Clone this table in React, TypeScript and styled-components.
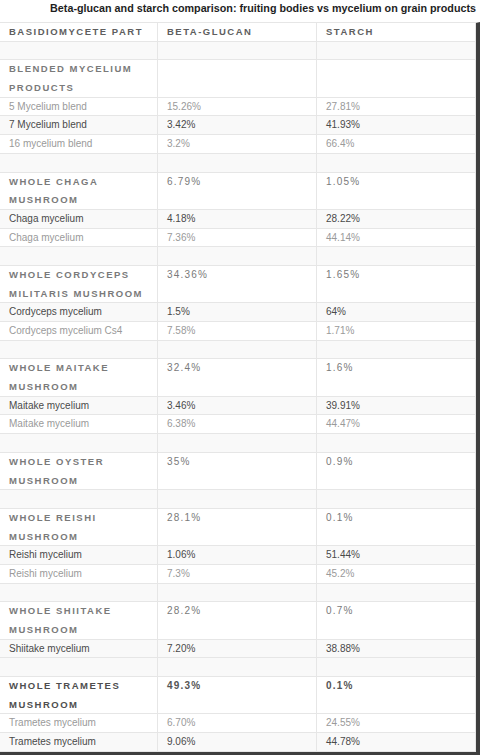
import React from "react";
import styled, { createGlobalStyle } from "styled-components";

type Row =
  | { kind: "empty" }
  | { kind: "group"; label: string; beta?: string; starch?: string; strong?: boolean }
  | { kind: "item"; label: string; beta: string; starch: string; dark: boolean };

const UNIT = 18.69;

const rows: Row[] = [
  { kind: "empty" },
  { kind: "group", label: "Blended mycelium products" },
  { kind: "item", label: "5 Mycelium blend", beta: "15.26%", starch: "27.81%", dark: false },
  { kind: "item", label: "7 Mycelium blend", beta: "3.42%", starch: "41.93%", dark: true },
  { kind: "item", label: "16 mycelium blend", beta: "3.2%", starch: "66.4%", dark: false },
  { kind: "empty" },
  { kind: "group", label: "Whole chaga mushroom", beta: "6.79%", starch: "1.05%" },
  { kind: "item", label: "Chaga mycelium", beta: "4.18%", starch: "28.22%", dark: true },
  { kind: "item", label: "Chaga mycelium", beta: "7.36%", starch: "44.14%", dark: false },
  { kind: "empty" },
  { kind: "group", label: "Whole cordyceps militaris mushroom", beta: "34.36%", starch: "1.65%" },
  { kind: "item", label: "Cordyceps mycelium", beta: "1.5%", starch: "64%", dark: true },
  { kind: "item", label: "Cordyceps mycelium Cs4", beta: "7.58%", starch: "1.71%", dark: false },
  { kind: "empty" },
  { kind: "group", label: "Whole maitake mushroom", beta: "32.4%", starch: "1.6%" },
  { kind: "item", label: "Maitake mycelium", beta: "3.46%", starch: "39.91%", dark: true },
  { kind: "item", label: "Maitake mycelium", beta: "6.38%", starch: "44.47%", dark: false },
  { kind: "empty" },
  { kind: "group", label: "Whole oyster mushroom", beta: "35%", starch: "0.9%" },
  { kind: "empty" },
  { kind: "group", label: "Whole reishi mushroom", beta: "28.1%", starch: "0.1%" },
  { kind: "item", label: "Reishi mycelium", beta: "1.06%", starch: "51.44%", dark: true },
  { kind: "item", label: "Reishi mycelium", beta: "7.3%", starch: "45.2%", dark: false },
  { kind: "empty" },
  { kind: "group", label: "Whole shiitake mushroom", beta: "28.2%", starch: "0.7%" },
  { kind: "item", label: "Shiitake mycelium", beta: "7.20%", starch: "38.88%", dark: true },
  { kind: "empty" },
  { kind: "group", label: "Whole trametes mushroom", beta: "49.3%", starch: "0.1%", strong: true },
  { kind: "item", label: "Trametes mycelium", beta: "6.70%", starch: "24.55%", dark: false },
  { kind: "item", label: "Trametes mycelium", beta: "9.06%", starch: "44.78%", dark: true },
];

export default function App() {
  return (
    <>
      <GlobalStyle />
      <Page>
        <Title>Beta-glucan and starch comparison: fruiting bodies vs mycelium on grain products</Title>
        <Frame>
          <TableRow $lines={1} $bg="#ffffff">
            <HeadCell>Basidiomycete part</HeadCell>
            <HeadCell>Beta-glucan</HeadCell>
            <HeadCell>Starch</HeadCell>
          </TableRow>
          {rows.map((row, i) => {
            if (row.kind === "empty") {
              return (
                <TableRow key={i} $lines={1} $bg="#f9f9f9">
                  <Cell />
                  <Cell />
                  <Cell />
                </TableRow>
              );
            }
            if (row.kind === "group") {
              return (
                <TableRow key={i} $lines={2} $bg="#ffffff">
                  <GroupCell $strong={row.strong}>{row.label}</GroupCell>
                  <GroupValue $strong={row.strong}>{row.beta}</GroupValue>
                  <GroupValue $strong={row.strong}>{row.starch}</GroupValue>
                </TableRow>
              );
            }
            return (
              <TableRow key={i} $lines={1} $bg={row.dark ? "#f9f9f9" : "#ffffff"}>
                <ItemCell $dark={row.dark}>{row.label}</ItemCell>
                <ItemCell $dark={row.dark}>{row.beta}</ItemCell>
                <ItemCell $dark={row.dark}>{row.starch}</ItemCell>
              </TableRow>
            );
          })}
        </Frame>
      </Page>
    </>
  );
}

const GlobalStyle = createGlobalStyle`
  html, body {
    margin: 0;
    padding: 0;
    background: #ffffff;
  }
  body {
    font-family: "Liberation Sans", Arial, sans-serif;
  }
`;

const Page = styled.div`
  width: 480px;
  height: 755px;
  overflow: hidden;
  display: flex;
  flex-direction: column;
`;

const Title = styled.div`
  height: 22px;
  flex-shrink: 0;
  box-sizing: border-box;
  padding: 2px 4px 0 0;
  text-align: right;
  white-space: nowrap;
  font-size: 10.75px;
  font-weight: bold;
  line-height: 13px;
  color: #1e1e1e;
`;

const Frame = styled.div`
  width: 476px;
  flex-shrink: 0;
  border-top: 1px solid #e6e6e6;
  border-right: 4px solid #3e3e3e;
  border-bottom: 3px solid #3e3e3e;
  display: flex;
  flex-direction: column;
`;

const TableRow = styled.div<{ $lines: number; $bg: string }>`
  display: grid;
  grid-template-columns: 158px 159px 1fr;
  height: ${(p) => p.$lines * UNIT}px;
  box-sizing: border-box;
  border-bottom: 1px solid #e6e6e6;
  background: ${(p) => p.$bg};
`;

const Cell = styled.div`
  box-sizing: border-box;
  padding-left: 9px;
  border-right: 1px solid #e6e6e6;
  overflow: hidden;
  white-space: nowrap;
`;

const HeadCell = styled(Cell)`
  font-size: 9.5px;
  font-weight: bold;
  letter-spacing: 1.5px;
  text-transform: uppercase;
  line-height: ${UNIT - 1}px;
  color: #5e5e5e;
`;

const GroupCell = styled(Cell)<{ $strong?: boolean }>`
  font-size: 9.5px;
  font-weight: bold;
  letter-spacing: 1.5px;
  text-transform: uppercase;
  white-space: normal;
  line-height: ${UNIT}px;
  color: ${(p) => (p.$strong ? "#4e4e4e" : "#7a7a7a")};
`;

const GroupValue = styled(Cell)<{ $strong?: boolean }>`
  font-size: 10px;
  font-weight: ${(p) => (p.$strong ? "bold" : "normal")};
  letter-spacing: 1.2px;
  line-height: ${UNIT}px;
  color: ${(p) => (p.$strong ? "#555555" : "#7a7a7a")};
`;

const ItemCell = styled(Cell)<{ $dark: boolean }>`
  font-size: 10px;
  line-height: ${UNIT - 1}px;
  color: ${(p) => (p.$dark ? "#4a4a4a" : "#9a9a9a")};
`;
